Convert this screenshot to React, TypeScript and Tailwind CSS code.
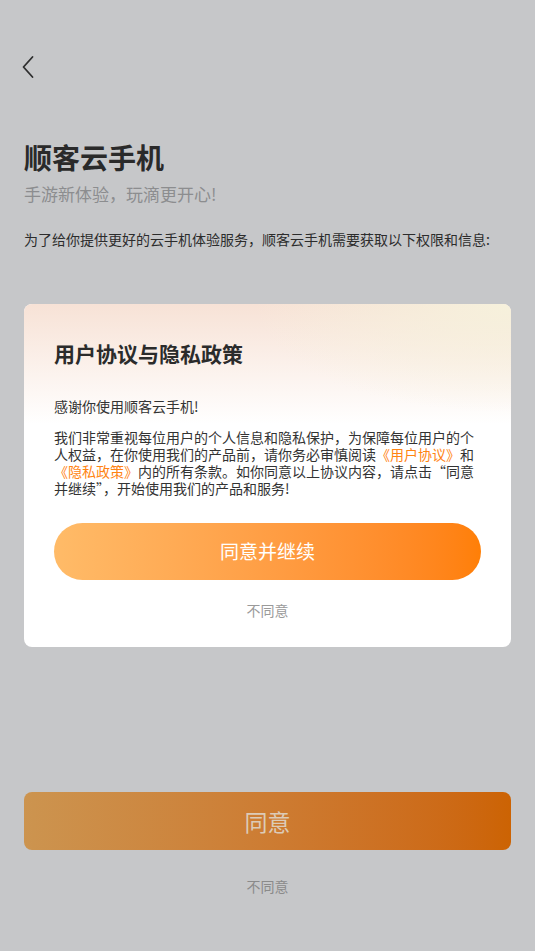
import React from "react";

export default function App() {
  const font = { fontFamily: '"Noto Sans CJK SC", "Noto Sans", sans-serif' };
  return (
    <div
      className="w-[535px] h-[951px] bg-[#c6c7c9] flex flex-col px-6 overflow-hidden"
      style={font}
    >
      <div className="pt-[55px] h-[80px]">
        <svg width="14" height="24" viewBox="0 0 14 24" className="-ml-[3px]">
          <path d="M11.5 2 L2.5 12 L11.5 22" fill="none" stroke="#2e2e2e" strokeWidth="1.8" strokeLinecap="round" strokeLinejoin="round" />
        </svg>
      </div>
      <div className="mt-[59px] text-[28px] leading-[36px] font-bold text-[#2a2a2a]">顺客云手机</div>
      <div className="mt-[8px] text-[17px] leading-[22px] text-[#8c8d8f]">手游新体验，玩滴更开心!</div>
      <div className="mt-[24px] text-[14px] leading-[20px] text-[#2c2c2c]">
        为了给你提供更好的云手机体验服务，顺客云手机需要获取以下权限和信息:
      </div>

      <div className="mt-[55px] rounded-[8px] overflow-hidden bg-white relative">
        <div className="absolute inset-x-0 top-0 h-[120px] bg-gradient-to-b from-[#f7e2d6] to-white" />
        <div className="absolute right-0 top-0 w-[260px] h-[110px] bg-[radial-gradient(ellipse_at_top_right,#f6f1dc_0%,rgba(246,241,220,0)_70%)]" />
        <div className="relative px-[30px] pt-[35px] pb-[27px] flex flex-col">
          <div className="text-[21px] leading-[28px] font-bold text-[#2b2b2b]">用户协议与隐私政策</div>
          <div className="mt-[31px] text-[14px] leading-[17px] text-[#333]">感谢你使用顺客云手机!</div>
          <div className="mt-[14px] text-[14px] leading-[17px] text-[#333]">
            我们非常重视每位用户的个人信息和隐私保护，为保障每位用户的个人权益，在你使用我们的产品前，请你务必审慎阅读
            <span className="text-[#ff8412]">《用户协议》</span>和
            <span className="text-[#ff8412]">《隐私政策》</span>
            内的所有条款。如你同意以上协议内容，请点击“同意并继续”，开始使用我们的产品和服务!
          </div>
          <div className="mt-[26px] h-[57px] rounded-full bg-gradient-to-r from-[#ffbb68] to-[#ff7f06] flex items-center justify-center text-white text-[19px]">
            同意并继续
          </div>
          <div className="mt-[20px] text-center text-[14px] leading-[20px] text-[#9a9a9a]">不同意</div>
        </div>
      </div>

      <div className="mt-[145px] h-[58px] rounded-[8px] bg-gradient-to-r from-[#cc944f] to-[#cc6303] flex items-center justify-center text-[23px] text-[#dccbb8]">
        同意
      </div>
      <div className="mt-[26px] text-center text-[14px] leading-[20px] text-[#8a8a8a]">不同意</div>
    </div>
  );
}
